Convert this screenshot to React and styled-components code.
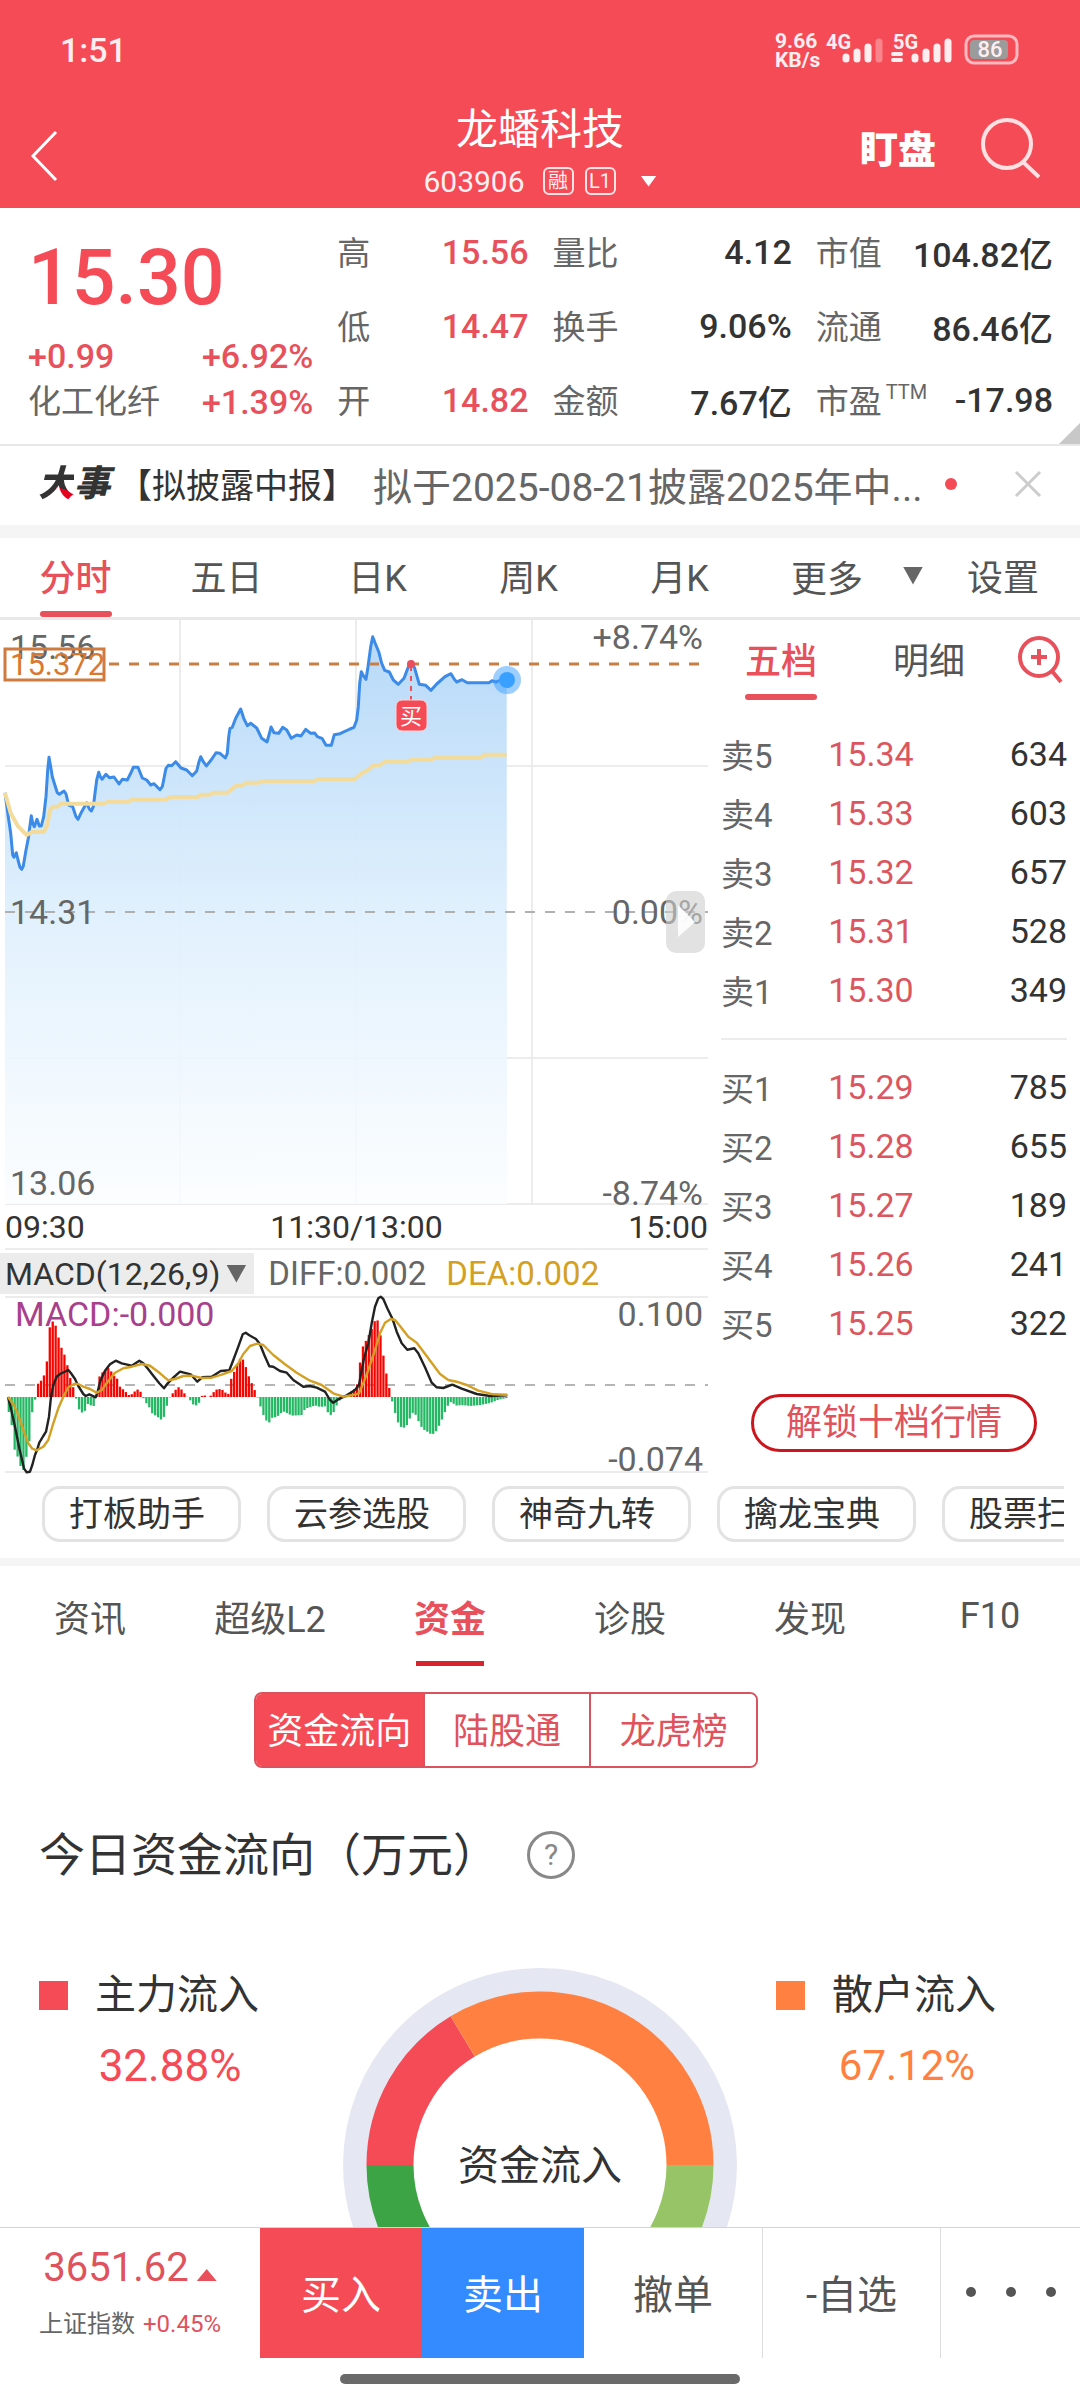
import React, { useState } from "react";
import styled, { createGlobalStyle, css } from "styled-components";

const GlobalStyle = createGlobalStyle`
  *, *::before, *::after {
    box-sizing: border-box;
  }
  body {
    margin: 0;
    background: #fff;
    color: #333;
    font-family: Roboto, "Noto Sans CJK SC", sans-serif;
    font-size: 34px;
  }
  button {
    font: inherit;
    color: inherit;
    background: none;
    border: 0;
    padding: 0;
    cursor: pointer;
  }
  svg {
    display: block;
  }
`;

const RED = "#f54b57";
const TEXT_RED = "#e8505b";

const Page = styled.div`
  display: flex;
  flex-direction: column;
  height: 100vh;
  overflow: hidden;
`;

const Content = styled.main`
  flex: 1;
  min-height: 0;
  overflow-y: auto;
  scrollbar-width: none;
`;

const Gap = styled.div`
  height: ${({ $size }) => $size}px;
  background: #f5f5f5;
`;

/* ---------- header ---------- */

const Header = styled.header`
  background: ${RED};
  color: #fff;
  height: 208px;
`;

const StatusBar = styled.div`
  display: flex;
  align-items: center;
  justify-content: space-between;
  height: 100px;
  padding: 0 60px;
  font-size: 34px;
  font-weight: 500;
  color: #ffeef0;
`;

const Nav = styled.nav`
  display: grid;
  grid-template-columns: 1fr auto 1fr;
  height: 108px;
  padding: 2px 40px 0;
`;

const BackButton = styled.button`
  width: 40px;
  height: 108px;
  margin-left: -12px;
`;

const StockTitle = styled.div`
  text-align: center;

  h1 {
    margin: 0;
    font-size: 42px;
    line-height: 56px;
    font-weight: 400;
  }
`;

const Triangle = styled.span`
  flex: none;
  width: ${({ $w }) => $w}px;
  height: ${({ $h }) => $h}px;
  background: ${({ $color }) => $color};
  clip-path: ${({ $up }) =>
    $up ? "polygon(50% 0, 100% 100%, 0 100%)" : "polygon(0 0, 100% 0, 50% 100%)"};
`;

const StockCode = styled.button`
  display: flex;
  align-items: center;
  gap: 11px;
  height: 46px;
  font-size: 30px;
  color: #fff0f1;

  ${Triangle} {
    margin-left: 14px;
  }
`;

const Badge = styled.span`
  width: 31px;
  height: 28px;
  border: 2px solid #ffe3e5;
  border-radius: 6px;
  font-size: 20px;
  line-height: 24px;
  text-align: center;

  &:first-of-type {
    margin-left: 7px;
  }
`;

const NavActions = styled.div`
  display: flex;
  align-items: center;
  justify-content: flex-end;
  gap: 44px;
  height: 92px;
`;

const WatchButton = styled.button`
  padding-bottom: 4px;
  font-size: 38px;
  font-weight: 900;
`;

/* ---------- quote ---------- */

const Quote = styled.section`
  position: relative;
  display: grid;
  grid-template-columns: 285fr 715fr;
  gap: 24px;
  padding: 7px 27px 7px 28px;
  border-bottom: 2px solid #e8e8e8;

  &::after {
    content: "";
    position: absolute;
    right: 0;
    bottom: 0;
    width: 21px;
    height: 21px;
    background: #c8c8c8;
    clip-path: polygon(100% 0, 100% 100%, 0 100%);
  }
`;

const Price = styled.div`
  margin-top: 8px;
  font-size: 77px;
  font-weight: 500;
  line-height: 110px;
  color: ${RED};
`;

const ChangeRow = styled.div`
  display: flex;
  justify-content: space-between;
  line-height: 46px;
  font-weight: 500;
  color: ${TEXT_RED};

  a {
    color: #666;
    font-size: 33px;
    font-weight: 400;
    text-decoration: none;
  }
`;

const Metrics = styled.dl`
  display: grid;
  grid-template-columns: 191fr 239fr 237fr;
  column-gap: 24px;
  margin: 0;
`;

const Metric = styled.div`
  display: flex;
  align-items: center;
  justify-content: space-between;
  height: 74px;
  white-space: nowrap;

  dt {
    padding-bottom: 2px;
    font-size: 33px;
    color: #666;
  }
  dt sup {
    font-size: 20px;
    margin-left: 4px;
    vertical-align: 14px;
    line-height: 0;
  }
  dd {
    margin: 0;
    font-weight: 500;
    color: ${({ $red }) => ($red ? TEXT_RED : "#333")};
  }
`;

/* ---------- news ---------- */

const News = styled.section`
  display: flex;
  align-items: center;
  height: 79px;
  padding: 0 38px 4px;
  white-space: nowrap;
`;

const NewsLogo = styled.strong`
  font-size: 36px;
  font-weight: 900;
  font-style: italic;
  line-height: 40px;

  span {
    display: inline-block;
    color: transparent;
    background: conic-gradient(from 105deg at 50% 58%, #e60020 75deg, #333 0);
    background-clip: text;
    -webkit-background-clip: text;
  }
`;

const NewsTag = styled.span`
  margin-left: 8px;
`;

const NewsText = styled.span`
  flex: 1;
  margin-left: 17px;
  font-size: 39px;
  color: #666;
`;

const NewsDot = styled.span`
  width: 12px;
  height: 12px;
  margin-right: 57px;
  border-radius: 50%;
  background: ${RED};
`;

/* ---------- chart tabs ---------- */

const activeBar = css`
  &::after {
    content: "";
    position: absolute;
    left: 50%;
    bottom: 0;
    width: 72px;
    height: 6px;
    margin-left: -36px;
    border-radius: 3px;
    background: ${TEXT_RED};
  }
`;

const PeriodTabs = styled.div`
  display: grid;
  grid-template-columns: repeat(5, 151fr) 171fr 154fr;
  height: 82px;
  border-bottom: 3px solid #e9e9e9;
`;

const Tab = styled.button`
  position: relative;
  padding-bottom: 5px;
  font-size: 36px;
  color: ${({ $active }) => ($active ? TEXT_RED : "#555")};
  font-weight: ${({ $active }) => ($active ? 500 : 400)};
  ${({ $active }) => $active && activeBar}
`;

const MoreTab = styled(Tab)`
  display: flex;
  align-items: center;
  justify-content: space-between;
  padding: 0 3px 4px 36px;
`;

/* ---------- charts ---------- */

const Board = styled.section`
  display: grid;
  grid-template-columns: 708fr 372fr;
`;

const ChartSvg = styled.svg`
  width: 100%;
  height: auto;
  font-size: 34px;
  overflow: visible;
`;

const TimeAxis = styled.div`
  display: flex;
  justify-content: space-between;
  margin-left: 5px;
  font-size: 32px;
  line-height: 42px;
  border-bottom: 2px solid #ececec;
`;

const Indicators = styled.div`
  display: flex;
  align-items: center;
  height: 41px;
  margin: 3px 0 2px;
  font-size: 33px;
  white-space: nowrap;
`;

const IndicatorSelect = styled.button`
  display: flex;
  align-items: center;
  gap: 6px;
  height: 41px;
  padding: 0 8px 0 5px;
  margin-right: 14px;
  font-size: 32px;
  background: #ececec;
`;

const Value = styled.span`
  margin-right: 20px;
  color: ${({ $color }) => $color};
`;

/* ---------- order book ---------- */

const Depth = styled.div`
  padding: 0 13px;
`;

const DepthTabs = styled.div`
  display: grid;
  grid-template-columns: 120fr 176fr 50fr;
  height: 80px;
  align-items: stretch;
`;

const DepthTable = styled.table`
  width: 100%;
  border-collapse: collapse;
  margin-top: ${({ $top }) => $top}px;

  th,
  td {
    height: 59px;
    padding: 0;
    text-align: left;
    font-weight: 400;
  }
  th {
    width: 31%;
    font-size: 33px;
    color: #666;
  }
  td {
    color: #dc5660;
    font-size: 34px;
  }
  td:last-child {
    text-align: right;
    color: #333;
  }
`;

const Divider = styled.hr`
  height: 2px;
  margin: 19px 0 0;
  border: 0;
  background: #ececec;
`;

const UnlockButton = styled.button`
  display: block;
  width: 286px;
  height: 58px;
  margin: 42px auto 0;
  border: 3px solid #cc161d;
  border-radius: 29px;
  font-size: 36px;
  line-height: 52px;
  color: #e0525c;
`;

/* ---------- tools ---------- */

const Tools = styled.div`
  display: flex;
  gap: 26px;
  margin: 12px 16px 0 42px;
  padding-bottom: 16px;
  overflow: hidden;
`;

const Tool = styled.button`
  flex: none;
  height: 56px;
  padding: 0 33px 0 24px;
  border: 3px solid #e3e3e3;
  border-radius: 18px;
  font-size: 34px;
  line-height: 48px;
`;

/* ---------- funds ---------- */

const SectionTabs = styled.div`
  display: grid;
  grid-template-columns: repeat(6, 1fr);
  height: 100px;
`;

const SectionTab = styled.button`
  position: relative;
  font-size: 36px;
  color: ${({ $active }) => ($active ? TEXT_RED : "#555")};
  font-weight: ${({ $active }) => ($active ? 700 : 400)};

  &::after {
    content: "";
    position: absolute;
    left: 50%;
    bottom: 0;
    width: 68px;
    height: 5px;
    margin-left: -34px;
    background: ${({ $active }) => ($active ? "#d9232d" : "transparent")};
  }
`;

const Segments = styled.div`
  display: grid;
  grid-template-columns: repeat(3, 1fr);
  width: 504px;
  height: 76px;
  margin: 26px 0 0 254px;
  border: 2px solid #d9525c;
  border-radius: 8px;
  overflow: hidden;
`;

const Segment = styled.button`
  padding-bottom: 4px;
  font-size: 36px;
  color: ${({ $active }) => ($active ? "#fff" : "#e0525c")};
  background: ${({ $active }) => ($active ? RED : "#fff")};

  & + & {
    border-left: 2px solid #d9525c;
  }
`;

const FlowTitle = styled.div`
  display: flex;
  align-items: center;
  gap: 28px;
  height: 70px;
  margin: 52px 0 0 39px;

  h2 {
    margin: 0;
    padding-bottom: 8px;
    font-size: 46px;
    font-weight: 400;
  }
`;

const HelpButton = styled.button`
  width: 48px;
  height: 48px;
  border: 3px solid #888;
  border-radius: 50%;
  font-size: 30px;
  line-height: 40px;
  color: #888;
`;

const Flow = styled.div`
  display: grid;
  grid-template-columns: 1fr 394px 1fr;
  margin-top: 78px;
`;

const Legend = styled.div`
  display: grid;
  grid-template-columns: 29px auto;
  column-gap: 27px;
  align-content: start;
  align-items: center;
  justify-content: ${({ $right }) => ($right ? "end" : "start")};
  padding: ${({ $right }) => ($right ? "0 84px 0 0" : "0 0 0 39px")};
  font-size: 41px;
  line-height: 54px;

  i {
    width: 29px;
    height: 29px;
    background: ${({ $color }) => $color};
  }
  strong {
    grid-column: 2;
    margin-top: 14px;
    padding-right: 14px;
    font-size: ${({ $right }) => ($right ? 42 : 44)}px;
    font-weight: 400;
    line-height: 60px;
    text-align: center;
    color: ${({ $color }) => $color};
  }
`;

/* ---------- trade bar ---------- */

const TradeBar = styled.footer`
  display: grid;
  grid-template-columns: 260fr 162fr 162fr 178fr 178fr 140fr;
  height: 131px;
  border-top: 1px solid #d4d4d4;
`;

const IndexBox = styled.div`
  display: flex;
  flex-direction: column;
  justify-content: center;
  align-items: center;
  padding-top: 6px;
  font-size: 24px;
  line-height: 56px;
  color: #666;

  div {
    display: flex;
    align-items: baseline;
    gap: 8px;
  }
  div:first-child {
    font-size: 40px;
  }
  span {
    color: #e0525c;
  }
`;

const TradeButton = styled.button`
  display: flex;
  align-items: center;
  justify-content: center;
  padding-bottom: 2px;
  font-size: 40px;
  color: ${({ $bg }) => ($bg ? "#fff" : "#555")};
  background: ${({ $bg }) => $bg || "#fff"};
  border-left: ${({ $line }) => ($line ? "1px solid #ddd" : "0")};
`;

const HomeArea = styled.div`
  display: flex;
  justify-content: center;
  align-items: center;
  height: 42px;
`;

const HomeBar = styled.span`
  width: 37%;
  height: 10px;
  border-radius: 5px;
  background: #6a6a6a;
`;

/* ---------- data ---------- */

const METRICS = [
  ["高", "15.56", true],
  ["量比", "4.12"],
  ["市值", "104.82亿"],
  ["低", "14.47", true],
  ["换手", "9.06%"],
  ["流通", "86.46亿"],
  ["开", "14.82", true],
  ["金额", "7.67亿"],
  ["市盈", "-17.98", false, "TTM"],
];

const PERIODS = ["分时", "五日", "日K", "周K", "月K"];

const SELLS = [
  ["卖5", "15.34", 634],
  ["卖4", "15.33", 603],
  ["卖3", "15.32", 657],
  ["卖2", "15.31", 528],
  ["卖1", "15.30", 349],
];

const BUYS = [
  ["买1", "15.29", 785],
  ["买2", "15.28", 655],
  ["买3", "15.27", 189],
  ["买4", "15.26", 241],
  ["买5", "15.25", 322],
];

const TOOLS = ["打板助手", "云参选股", "神奇九转", "擒龙宝典", "股票扫雷"];
const SECTIONS = ["资讯", "超级L2", "资金", "诊股", "发现", "F10"];
const SEGMENTS = ["资金流向", "陆股通", "龙虎榜"];

// chart samples are "x,y" pairs on a grid three times finer than the svg
const PRICE = `15,548 25,620 32,670 38,735 42,742 49,728 54,750 60,772 65,778 70,768 77,725 85,685
94,617 98,640 103,650 111,628 118,648 124,648 131,620 138,560 143,480 147,442 152,470 157,500
163,520 172,548 178,553 192,543 198,552 206,585 218,590 228,620 234,628 245,605 260,578 268,597
274,603 280,590 285,550 290,510 296,487 301,500 306,508 318,493 328,503 342,501 357,522 367,508
382,510 392,490 400,472 414,472 427,504 440,510 452,525 462,521 480,539 487,530 493,500 498,475
505,466 515,467 527,455 543,474 560,480 577,497 590,483 597,455 602,440 610,455 619,468 635,448
648,428 660,430 676,444 682,430 686,380 690,355 697,352 707,325 722,297 731,325 742,347 752,340
770,354 785,385 801,396 807,375 813,351 822,368 836,370 848,352 860,360 874,385 890,375 903,378
917,358 932,370 944,369 952,380 966,385 978,406 994,406 1003,374 1020,371 1050,357 1062,352
1070,330 1075,290 1079,220 1084,185 1090,197 1098,208 1104,170 1112,110 1118,80 1125,98 1136,125
1145,160 1154,181 1168,186 1180,210 1195,223 1212,205 1224,173 1234,155 1244,175 1258,223
1277,226 1293,241 1310,222 1335,200 1353,191 1363,208 1370,216 1386,209 1402,218 1467,218
1476,212 1488,216 1498,212 1520,210`;

const AVERAGE = `15,548 32,610 55,650 80,675 95,666 132,665 142,645 150,600 158,590 172,590 183,581
310,581 323,575 385,575 395,569 497,569 510,561 592,561 603,554 628,554 640,548 682,548 700,533
708,528 725,527 738,518 776,518 790,513 943,513 955,507 1064,507 1085,490 1100,483 1120,466
1142,464 1155,455 1220,455 1235,450 1292,450 1304,443 1440,443 1454,434 1520,434`;

const DIFF = `24,351 34,390 45,440 58,505 72,565 80,577 90,575 97,555 105,525 112,508 118,488
130,468 138,455 147,410 153,350 160,315 170,290 180,282 193,276 205,270 213,280 225,297 235,318
250,342 257,348 268,343 287,352 293,335 300,305 315,272 330,253 347,242 365,250 395,257 418,242
430,250 445,268 460,287 478,310 492,325 503,310 520,293 540,275 572,283 592,305 607,292 635,290
662,273 688,271 700,240 715,200 728,163 737,158 748,166 768,177 780,193 793,225 808,259 820,260
840,273 860,278 880,300 910,320 930,318 950,323 975,335 990,360 1000,368 1015,358 1040,346
1065,330 1077,315 1085,270 1092,235 1105,190 1115,130 1125,80 1135,55 1142,50 1150,57 1162,85
1178,118 1190,155 1205,190 1222,209 1243,205 1255,220 1275,262 1295,308 1310,322 1330,324
1357,314 1385,326 1430,342 1470,348 1522,346`;

const DEA = `24,351 40,372 55,405 70,450 85,490 97,506 110,511 130,500 145,480 160,430 175,385
190,350 205,322 222,312 235,312 250,320 270,327 290,338 305,330 325,303 345,278 370,265 395,260
425,252 450,257 480,280 505,301 525,297 550,288 575,287 605,294 635,293 665,284 695,273 715,250
730,222 750,198 772,191 790,195 820,225 855,253 890,278 930,302 965,315 1000,340 1030,350
1055,346 1077,340 1090,310 1105,270 1125,210 1140,160 1155,128 1172,117 1185,120 1200,138
1225,170 1250,188 1285,235 1320,282 1345,300 1370,305 1400,315 1435,332 1480,343 1522,344`;

const HISTOGRAM = `26,-45 36,-90 44,-162 53,-180 62,-210 70,-219 78,-183 88,-130 97,-38 105,-8
113,39 122,48 131,63 140,105 149,210 158,227 166,216 174,183 183,150 192,130 201,98 210,58
219,30 228,-5 237,-38 246,-47 255,-41 263,-21 280,-29 288,-3 297,60 306,73 315,80 325,87 334,76
343,62 352,54 360,30 370,22 378,14 387,5 396,9 405,18 411,23 420,18 429,-2 438,-18 447,-30
455,-48 465,-55 473,-60 481,-68 490,-65 498,-33 507,-4 516,9 525,20 534,30 543,24 552,12 560,2
568,-6 577,-21 586,-26 595,-22 604,3 613,5 622,0 631,3 640,14 648,22 657,24 666,22 675,14 684,6
690,47 699,68 708,90 717,113 725,119 734,101 743,69 752,48 761,27 770,5 778,-18 787,-48 796,-66
805,-82 813,-63 830,-60 848,-43 857,-46 875,-56 905,-54 915,-35 932,-30 945,-25 960,-30 975,-28
985,-50 996,-56 1005,-35 1014,-15 1030,3 1045,10 1060,20 1072,40 1083,132 1092,165 1101,171
1110,198 1119,210 1128,245 1135,220 1144,168 1152,108 1161,57 1170,15 1179,-26 1188,-59
1197,-86 1206,-92 1215,-92 1224,-78 1233,-53 1240,-45 1250,-58 1258,-80 1268,-96 1285,-106
1294,-113 1305,-108 1315,-90 1328,-62 1340,-30 1352,-15 1370,-26 1385,-24 1410,-27 1440,-24
1470,-18 1495,-8 1525,-2`;

const parse = (text) => text.split(/\s+/).map((pair) => pair.split(",").map(Number));

const toPoints = (text, top) =>
  parse(text)
    .map(([x, y]) => `${(x / 3).toFixed(1)},${(y / 3 - top).toFixed(1)}`)
    .join(" ");

const MINUTES = 171;

const buildBars = () => {
  const samples = parse(HISTOGRAM);
  const bars = [];
  for (let i = 0; i < MINUTES; i++) {
    const x = 26 + i * 8.78;
    const next = Math.max(1, samples.findIndex(([sx]) => sx >= x));
    const [x0, y0] = samples[next - 1];
    const [x1, y1] = samples[next];
    const value = y0 + ((y1 - y0) * (x - x0)) / (x1 - x0);
    bars.push({ x: x / 3, value: value / 3 });
  }
  return bars;
};

const BARS = buildBars();

/* ---------- components ---------- */

const StatusIcons = () => (
  <svg width="246" height="44" viewBox="774 28 246 44" fill="#ffeef0">
    <g fontSize="21" fontWeight="700">
      <text x="775" y="48">9.66</text>
      <text x="775" y="67">KB/s</text>
      <text x="826" y="49" fontSize="20">4G</text>
      <text x="893" y="49" fontSize="20">5G</text>
    </g>
    <g stroke="#ffeef0" strokeWidth="7" strokeLinecap="round">
      <path d="M846 57V59M857 52V59M868 47V59" />
      <path d="M879 42V59" opacity="0.35" />
      <path d="M915 57V59M926 52V59M937 47V59M948 42V59" />
      <path d="M893 54H901M893 60H901" strokeWidth="4" />
    </g>
    <rect x="966" y="36" width="51" height="27" rx="8" fill="none" stroke="#ffb9be" strokeWidth="3" />
    <rect x="970" y="40" width="38" height="19" rx="4" fill="#9b9b9b" />
    <text x="990" y="57" fontSize="22" textAnchor="middle">86</text>
  </svg>
);

const PriceChart = () => {
  const price = toPoints(PRICE, 10);
  return (
    <ChartSvg viewBox="0 0 708 586" role="img" aria-label="分时走势">
      <defs>
        <linearGradient id="area" x1="0" y1="0" x2="0" y2="1">
          <stop offset="0" stopColor="#b7d9f8" />
          <stop offset="0.5" stopColor="#e0f0fd" stopOpacity="0.95" />
          <stop offset="1" stopColor="#fbfdff" stopOpacity="0.85" />
        </linearGradient>
      </defs>
      <path
        d="M180 0V584M356 0V584M532 0V584M5 146H708M5 438H708M5 584H708"
        stroke="#ececec"
        strokeWidth="2"
      />
      <polygon points={`5,584 ${price} 507,584`} fill="url(#area)" />
      <path d="M5 292H708" stroke="#b0b0b0" strokeWidth="2" strokeDasharray="10 10" />
      <polyline
        points={price}
        fill="none"
        stroke="#3c8be8"
        strokeWidth="3"
        strokeLinejoin="round"
      />
      <polyline
        points={toPoints(AVERAGE, 10)}
        fill="none"
        stroke="#f3dc9b"
        strokeWidth="4"
        strokeLinejoin="round"
      />
      <path d="M109 44H702" stroke="#c87f45" strokeWidth="3" strokeDasharray="10 10" />
      <g fill="#666">
        <text x="10" y="39">15.56</text>
        <text x="10" y="304">14.31</text>
        <text x="10" y="575">13.06</text>
        <g textAnchor="end">
          <text x="703" y="29">+8.74%</text>
          <text x="703" y="304">0.00%</text>
          <text x="703" y="585">-8.74%</text>
        </g>
      </g>
      <rect x="5" y="29" width="99" height="31" fill="none" stroke="#cf7a3e" strokeWidth="3" />
      <text x="10" y="55" fontSize="31" fill="#d9782f">15.372</text>
      <path d="M411 46V80" stroke="#e8505b" strokeWidth="2" strokeDasharray="5 5" />
      <circle cx="411" cy="44" r="4" fill="#e8505b" />
      <rect x="396" y="80" width="31" height="31" rx="6" fill={RED} stroke="#ffd5d8" />
      <text x="411" y="104" fontSize="22" fill="#fff" textAnchor="middle">买</text>
      <circle cx="507" cy="60" r="14" fill="#3aa0ff" opacity="0.5" />
      <circle cx="507" cy="60" r="8" fill="#3aa0ff" />
      <rect x="666" y="271" width="39" height="62" rx="10" fill="#cfcfcf" opacity="0.6" />
      <path d="M678 285L695 302L678 317Z" fill="#fff" opacity="0.9" />
    </ChartSvg>
  );
};

const MacdChart = () => (
  <ChartSvg viewBox="0 0 708 178" role="img" aria-label="MACD">
    <path d="M5 1H708M5 176H708" stroke="#ececec" strokeWidth="2" />
    <path d="M5 89H708" stroke="#b5b5b5" strokeWidth="2" strokeDasharray="10 10" />
    <text x="15" y="30" fill="#a8408c">MACD:-0.000</text>
    {BARS.map(({ x, value }) => (
      <rect
        key={x}
        x={x - 1}
        y={value > 0 ? 101 - value : 101}
        width="2.3"
        height={Math.abs(value)}
        fill={value > 0 ? "#f50500" : "#25b864"}
      />
    ))}
    <g fill="none" strokeWidth="2.4" strokeLinejoin="round">
      <polyline points={toPoints(DIFF, 16)} stroke="#222" />
      <polyline points={toPoints(DEA, 16)} stroke="#d4a023" />
    </g>
    <g fill="#666" textAnchor="end">
      <text x="703" y="30">0.100</text>
      <text x="703" y="175">-0.074</text>
    </g>
  </ChartSvg>
);

const arc = (from, to, r = 150) => {
  const point = (deg) => {
    const rad = (deg * Math.PI) / 180;
    return `${(197 - r * Math.cos(rad)).toFixed(1)} ${(197 - r * Math.sin(rad)).toFixed(1)}`;
  };
  return `M${point(from)}A${r} ${r} 0 0 1 ${point(to)}`;
};

const Donut = () => (
  <svg width="394" height="394" viewBox="0 0 394 394" role="img" aria-label="资金流入占比">
    <circle cx="197" cy="197" r="185" fill="none" stroke="#e5e8f2" strokeWidth="24" />
    <g fill="none" strokeWidth="47">
      <path d={arc(0, 59)} stroke="#f54b57" />
      <path d={arc(59, 180)} stroke="#ff8040" />
      <path d={arc(180, 270)} stroke="#97c467" />
      <path d={arc(270, 360)} stroke="#3da446" />
    </g>
    <text x="197" y="212" fontSize="41" fill="#333" textAnchor="middle">资金流入</text>
  </svg>
);

const DepthRows = ({ rows, top }) => (
  <DepthTable $top={top}>
    <tbody>
      {rows.map(([label, price, volume]) => (
        <tr key={label}>
          <th scope="row">{label}</th>
          <td>{price}</td>
          <td>{volume}</td>
        </tr>
      ))}
    </tbody>
  </DepthTable>
);

const App = () => {
  const [period, setPeriod] = useState("分时");
  const [depth, setDepth] = useState("五档");
  const [section, setSection] = useState("资金");
  const [segment, setSegment] = useState("资金流向");

  return (
    <Page>
      <GlobalStyle />
      <Header>
        <StatusBar>
          <span>1:51</span>
          <StatusIcons />
        </StatusBar>
        <Nav>
          <BackButton aria-label="返回">
            <svg width="40" height="108" viewBox="0 0 40 108" fill="none" stroke="#fff" strokeWidth="3">
              <path d="M28 30L5 54L28 78" />
            </svg>
          </BackButton>
          <StockTitle>
            <h1>龙蟠科技</h1>
            <StockCode>
              603906
              <Badge>融</Badge>
              <Badge>L1</Badge>
              <Triangle $w={16} $h={11} $color="#fff" />
            </StockCode>
          </StockTitle>
          <NavActions>
            <WatchButton>盯盘</WatchButton>
            <button aria-label="搜索">
              <svg width="60" height="62" viewBox="0 0 60 62" fill="none" stroke="#ffe1e3" strokeWidth="4">
                <circle cx="27" cy="27" r="24" />
                <path d="M43 45L59 60" />
              </svg>
            </button>
          </NavActions>
        </Nav>
      </Header>

      <Content>
        <Quote>
          <div>
            <Price>15.30</Price>
            <ChangeRow>
              <span>+0.99</span>
              <span>+6.92%</span>
            </ChangeRow>
            <ChangeRow>
              <a href="#sector">化工化纤</a>
              <span>+1.39%</span>
            </ChangeRow>
          </div>
          <Metrics>
            {METRICS.map(([label, value, red, sup]) => (
              <Metric key={label} $red={red}>
                <dt>
                  {label}
                  {sup && <sup>{sup}</sup>}
                </dt>
                <dd>{value}</dd>
              </Metric>
            ))}
          </Metrics>
        </Quote>

        <News>
          <NewsLogo>
            <span>大</span>事
          </NewsLogo>
          <NewsTag>【拟披露中报】</NewsTag>
          <NewsText>拟于2025-08-21披露2025年中...</NewsText>
          <NewsDot />
          <button aria-label="关闭">
            <svg width="28" height="28" viewBox="0 0 28 28" stroke="#ccc" strokeWidth="3">
              <path d="M2 2L26 26M26 2L2 26" />
            </svg>
          </button>
        </News>
        <Gap $size={13} />

        <PeriodTabs>
          {PERIODS.map((name) => (
            <Tab key={name} $active={name === period} onClick={() => setPeriod(name)}>
              {name}
            </Tab>
          ))}
          <MoreTab>
            更多
            <Triangle $w={20} $h={18} $color="#666" />
          </MoreTab>
          <Tab>设置</Tab>
        </PeriodTabs>

        <Board>
          <div>
            <PriceChart />
            <TimeAxis>
              <span>09:30</span>
              <span>11:30/13:00</span>
              <span>15:00</span>
            </TimeAxis>
            <Indicators>
              <IndicatorSelect>
                MACD(12,26,9)
                <Triangle $w={20} $h={18} $color="#666" />
              </IndicatorSelect>
              <Value $color="#666">DIFF:0.002</Value>
              <Value $color="#d4a023">DEA:0.002</Value>
            </Indicators>
            <MacdChart />
          </div>
          <Depth>
            <DepthTabs>
              {["五档", "明细"].map((name) => (
                <Tab key={name} $active={name === depth} onClick={() => setDepth(name)}>
                  {name}
                </Tab>
              ))}
              <button aria-label="放大">
                <svg width="48" height="52" viewBox="0 0 48 52" fill="none" stroke={TEXT_RED} strokeWidth="4">
                  <circle cx="22" cy="23" r="19" />
                  <path d="M35 37L44 48M14 23H30M22 15V31" />
                </svg>
              </button>
            </DepthTabs>
            <DepthRows rows={SELLS} top={24} />
            <Divider />
            <DepthRows rows={BUYS} top={17} />
            <UnlockButton>解锁十档行情</UnlockButton>
          </Depth>
        </Board>

        <Tools>
          {TOOLS.map((name) => (
            <Tool key={name}>{name}</Tool>
          ))}
        </Tools>
        <Gap $size={8} />

        <SectionTabs>
          {SECTIONS.map((name) => (
            <SectionTab key={name} $active={name === section} onClick={() => setSection(name)}>
              {name}
            </SectionTab>
          ))}
        </SectionTabs>
        <Segments>
          {SEGMENTS.map((name) => (
            <Segment key={name} $active={name === segment} onClick={() => setSegment(name)}>
              {name}
            </Segment>
          ))}
        </Segments>
        <FlowTitle>
          <h2>今日资金流向（万元）</h2>
          <HelpButton aria-label="说明">?</HelpButton>
        </FlowTitle>
        <Flow>
          <Legend $color="#f54b57">
            <i />
            <span>主力流入</span>
            <strong>32.88%</strong>
          </Legend>
          <Donut />
          <Legend $color="#ff8040" $right>
            <i />
            <span>散户流入</span>
            <strong>67.12%</strong>
          </Legend>
        </Flow>
      </Content>

      <TradeBar>
        <IndexBox>
          <div>
            <span>3651.62</span>
            <Triangle $w={20} $h={12} $color={TEXT_RED} $up />
          </div>
          <div>
            上证指数 <span>+0.45%</span>
          </div>
        </IndexBox>
        <TradeButton $bg={RED}>买入</TradeButton>
        <TradeButton $bg="#348bff">卖出</TradeButton>
        <TradeButton>撤单</TradeButton>
        <TradeButton $line>-自选</TradeButton>
        <TradeButton $line aria-label="更多">
          <svg width="90" height="10" viewBox="0 0 90 10" fill="#555">
            <circle cx="5" cy="5" r="5" />
            <circle cx="45" cy="5" r="5" />
            <circle cx="85" cy="5" r="5" />
          </svg>
        </TradeButton>
      </TradeBar>
      <HomeArea>
        <HomeBar />
      </HomeArea>
    </Page>
  );
};

export default App;
